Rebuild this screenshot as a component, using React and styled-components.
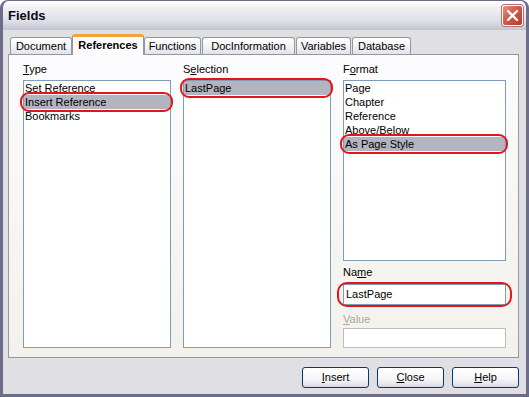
import styled, { createGlobalStyle } from 'styled-components';

const GlobalStyle = createGlobalStyle`
  html, body {
    margin: 0;
    padding: 0;
    background: #ffffff;
  }
  body {
    font-family: "Liberation Sans", Arial, sans-serif;
    font-size: 11px;
    color: #000;
  }
`;

const Window = styled.div`
  width: 529px;
  height: 397px;
  box-sizing: border-box;
  border: 3px solid #6b6d8a;
  border-top-width: 1px;
  border-radius: 8px 8px 0 0;
  background: #e0dfe3;
  display: flex;
  flex-direction: column;
  overflow: hidden;
`;

const TitleBar = styled.div`
  height: 29px;
  flex: none;
  display: flex;
  align-items: center;
  justify-content: space-between;
  padding: 0 3px 0 5px;
  border-radius: 7px 7px 0 0;
  background: linear-gradient(#ffffff 0%, #f0f0f4 25%, #dedee6 70%, #c3c4d2 100%);
`;

const Title = styled.span`
  font-size: 13px;
  font-weight: bold;
  color: #0b0b16;
`;

const CloseBox = styled.div`
  width: 21px;
  height: 21px;
  box-sizing: border-box;
  border: 1px solid #ffffff;
  border-radius: 3px;
  background: linear-gradient(135deg, #e8907f 0%, #d45a48 45%, #b8392c 100%);
  display: flex;
  align-items: center;
  justify-content: center;
  box-shadow: 0 0 0 1px #b4707a;
`;

const Body = styled.div`
  flex: 1;
  display: flex;
  flex-direction: column;
  padding: 4px 7px 0 5px;
`;

const TabRow = styled.div`
  display: flex;
  align-items: flex-end;
  height: 21px;
  gap: 1px;
  padding-left: 2px;
  margin-bottom: -1px;
  position: relative;
  z-index: 1;
`;

const Tab = styled.div`
  width: ${(p) => p.$w}px;
  box-sizing: border-box;
  text-align: center;
  border: 1px solid #919b9c;
  border-bottom: none;
  border-radius: 3px 3px 0 0;
  ${(p) =>
    p.$active
      ? `
    height: 21px;
    margin: 0 -1px;
    line-height: 17px;
    font-weight: bold;
    background: #fcfcfe;
    border-top: 3px solid #f2a33a;
  `
      : `
    height: 17px;
    margin-bottom: 1px;
    line-height: 16px;
    background: linear-gradient(#ffffff 0%, #f3f3f6 50%, #e2e2ea 100%);
  `}
`;

const Panel = styled.div`
  height: 304px;
  box-sizing: border-box;
  border: 1px solid #919b9c;
  background: linear-gradient(#fcfcfe 0%, #f6f5f1 60%, #f2f1eb 100%);
  padding: 7px 11px 9px 14px;
  display: grid;
  grid-template-columns: 148px 148px 163px;
  column-gap: 12px;
`;

const Column = styled.div`
  display: flex;
  flex-direction: column;
  min-height: 0;
`;

const Label = styled.div`
  height: 14px;
  line-height: 14px;
  margin-top: ${(p) => p.$top || 0}px;
  color: ${(p) => (p.$disabled ? '#aca899' : '#000')};
`;

const Key = styled.span`
  text-decoration: underline;
`;

const ListBox = styled.div`
  flex: 1;
  margin-top: 4px;
  box-sizing: border-box;
  border: 1px solid #7f9db9;
  background: #ffffff;
`;

const Item = styled.div`
  position: relative;
  height: 14px;
  line-height: 14px;
  padding-left: 1px;
  white-space: nowrap;
  background: ${(p) => (p.$selected ? '#b2b4bf' : 'transparent')};

  ${(p) =>
    p.$marked &&
    `
    &::after {
      content: '';
      position: absolute;
      top: -3px;
      bottom: -3px;
      left: -4px;
      right: -3px;
      border: 2px solid #e4141b;
      border-radius: 9px;
    }
  `}
`;

const FieldWrap = styled.div`
  position: relative;
  margin-top: ${(p) => p.$top}px;

  ${(p) =>
    p.$marked &&
    `
    &::after {
      content: '';
      position: absolute;
      top: -2px;
      bottom: -2px;
      left: -6px;
      right: -6px;
      border: 2px solid #e4141b;
      border-radius: 10px;
    }
  `}
`;

const Input = styled.div`
  height: ${(p) => p.$h}px;
  box-sizing: border-box;
  border: 1px solid ${(p) => (p.$disabled ? '#bdbdbd' : '#7f9db9')};
  background: #ffffff;
  padding-left: 2px;
  line-height: ${(p) => p.$h - 2}px;
`;

const Footer = styled.div`
  display: flex;
  justify-content: flex-end;
  gap: 8px;
  margin-top: 9px;
`;

const Button = styled.div`
  width: 67px;
  height: 21px;
  box-sizing: border-box;
  border: 1px solid #003c74;
  border-radius: 3px;
  background: linear-gradient(#ffffff 0%, #f6f6f8 55%, #e6e6ee 85%, #d4d4e0 100%);
  text-align: center;
  line-height: 19px;
`;

const tabs = [
  { name: 'Document', w: 62 },
  { name: 'References', w: 72, active: true },
  { name: 'Functions', w: 57 },
  { name: 'DocInformation', w: 93 },
  { name: 'Variables', w: 55 },
  { name: 'Database', w: 59 },
];

const typeItems = ['Set Reference', 'Insert Reference', 'Bookmarks'];
const formatItems = ['Page', 'Chapter', 'Reference', 'Above/Below', 'As Page Style'];

const CloseIcon = () => (
  <svg width="13" height="13" viewBox="0 0 13 13">
    <path d="M2 2 L11 11 M11 2 L2 11" stroke="#ffffff" strokeWidth="2.4" strokeLinecap="round" />
  </svg>
);

const App = () => (
  <>
    <GlobalStyle />
    <Window>
      <TitleBar>
        <Title>Fields</Title>
        <CloseBox>
          <CloseIcon />
        </CloseBox>
      </TitleBar>
      <Body>
        <TabRow>
          {tabs.map((t) => (
            <Tab key={t.name} $w={t.w} $active={t.active}>
              {t.name}
            </Tab>
          ))}
        </TabRow>
        <Panel>
          <Column>
            <Label>
              <Key>T</Key>ype
            </Label>
            <ListBox>
              {typeItems.map((it) => (
                <Item key={it} $selected={it === 'Insert Reference'} $marked={it === 'Insert Reference'}>
                  {it}
                </Item>
              ))}
            </ListBox>
          </Column>
          <Column>
            <Label>
              S<Key>e</Key>lection
            </Label>
            <ListBox>
              <Item $selected $marked>
                LastPage
              </Item>
            </ListBox>
          </Column>
          <Column>
            <Label>
              F<Key>o</Key>rmat
            </Label>
            <ListBox>
              {formatItems.map((it) => (
                <Item key={it} $selected={it === 'As Page Style'} $marked={it === 'As Page Style'}>
                  {it}
                </Item>
              ))}
            </ListBox>
            <Label $top={4}>
              Na<Key>m</Key>e
            </Label>
            <FieldWrap $top={5} $marked>
              <Input $h={21}>LastPage</Input>
            </FieldWrap>
            <Label $top={7} $disabled>
              <Key>V</Key>alue
            </Label>
            <FieldWrap $top={2}>
              <Input $h={20} $disabled />
            </FieldWrap>
          </Column>
        </Panel>
        <Footer>
          <Button>
            <Key>I</Key>nsert
          </Button>
          <Button>
            <Key>C</Key>lose
          </Button>
          <Button>
            <Key>H</Key>elp
          </Button>
        </Footer>
      </Body>
    </Window>
  </>
);

export default App;
